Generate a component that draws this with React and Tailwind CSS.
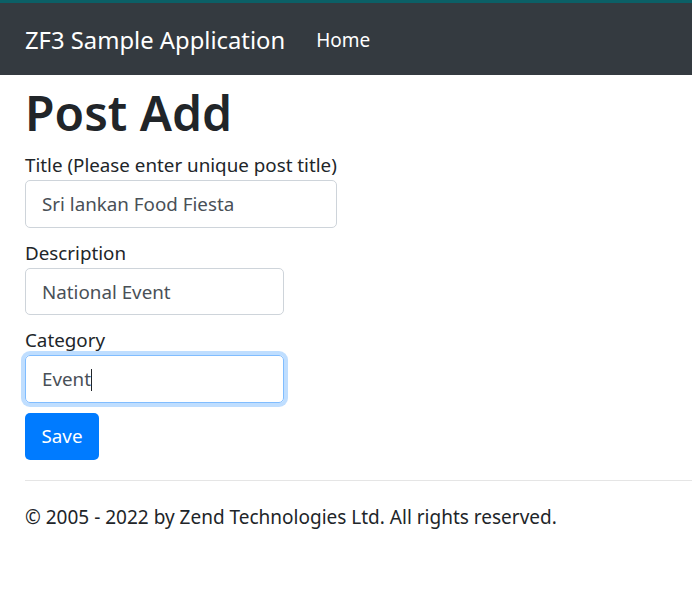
export default function App() {
  return (
    <div className="min-h-screen bg-white text-[#212529]" style={{ fontFamily: '"Segoe UI", "Noto Sans", "Open Sans", sans-serif' }}>
      <nav className="h-[75px] bg-[#343a40] border-t-[3px] border-[#0b5f66] flex items-center px-[25px] pt-[3px]">
        <span className="text-[23.8px] text-white leading-none">ZF3 Sample Application</span>
        <span className="ml-[31px] text-[19px] text-white leading-none">Home</span>
      </nav>

      <div className="px-[25px]">
        <h1 className="text-[48px] font-semibold leading-[60px] mt-[8px] mb-[7px]">Post Add</h1>

        <form className="flex flex-col">
          <label className="text-[18.8px] leading-[30px]">Title (Please enter unique post title)</label>
          <input
            className="w-[312px] h-[48px] border border-[#ced4da] rounded-[5px] px-[16px] text-[18.8px] text-[#495057] outline-none"
            defaultValue="Sri lankan Food Fiesta"
          />

          <label className="text-[18.8px] leading-[30px] mt-[10px]">Description</label>
          <input
            className="w-[259px] h-[47px] border border-[#ced4da] rounded-[5px] px-[16px] text-[18.8px] text-[#495057] outline-none"
            defaultValue="National Event"
          />

          <label className="text-[18.8px] leading-[30px] mt-[10px]">Category</label>
          <div className="relative w-[259px]">
            <input
              className="w-[259px] h-[48px] border border-[#80bdff] rounded-[5px] px-[16px] text-[18.8px] text-[#495057] outline-none shadow-[0_0_0_4px_rgba(0,123,255,0.25)]"
              defaultValue="Event"
            />
            <span className="absolute left-[66px] top-[14px] w-px h-[22px] bg-[#212529]" />
          </div>

          <button
            type="button"
            className="mt-[10px] w-[74px] h-[47px] bg-[#007bff] text-white text-[18.8px] rounded-[5px]"
          >
            Save
          </button>
        </form>

        <hr className="mt-[20px] border-t border-[rgba(0,0,0,0.1)] -mr-[25px]" />

        <footer className="pt-[21px] text-[19px] leading-[30px]">
          © 2005 - 2022 by Zend Technologies Ltd. All rights reserved.
        </footer>
      </div>
    </div>
  );
}
